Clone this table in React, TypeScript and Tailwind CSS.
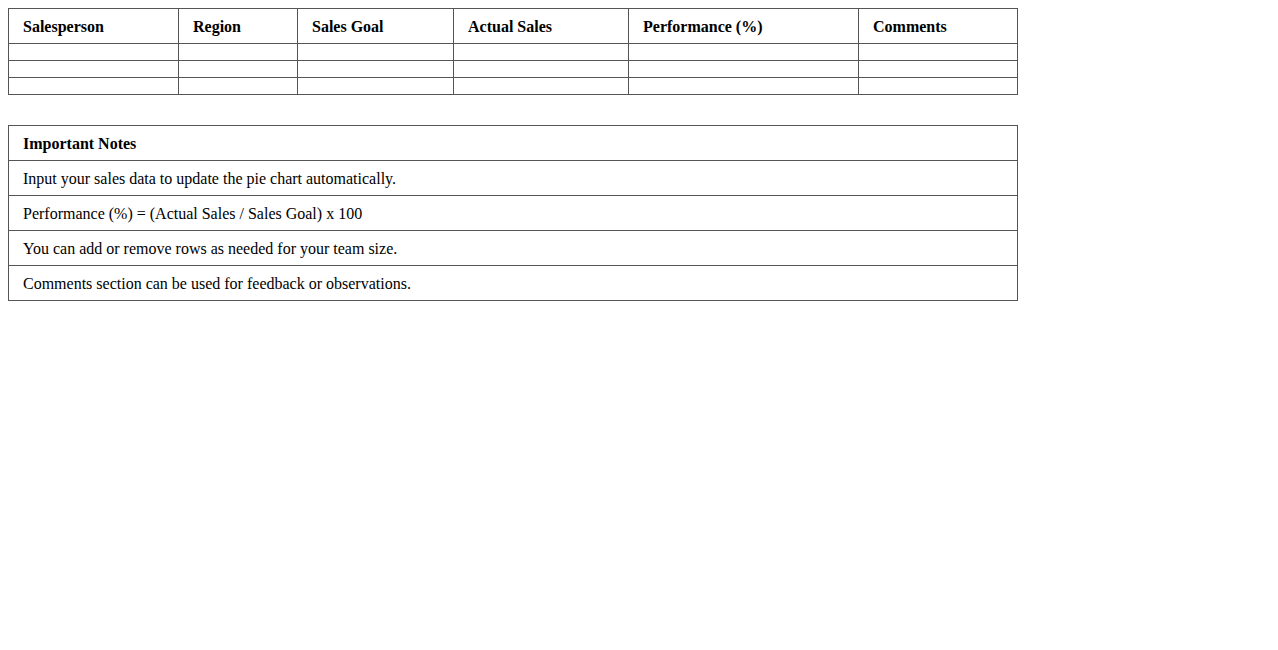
const COLS = [
  { label: "Salesperson", w: "w-[170px]" },
  { label: "Region", w: "w-[119px]" },
  { label: "Sales Goal", w: "w-[156px]" },
  { label: "Actual Sales", w: "w-[175px]" },
  { label: "Performance (%)", w: "w-[230px]" },
  { label: "Comments", w: "w-[159px]" },
];

const NOTES = [
  "Input your sales data to update the pie chart automatically.",
  "Performance (%) = (Actual Sales / Sales Goal) x 100",
  "You can add or remove rows as needed for your team size.",
  "Comments section can be used for feedback or observations.",
];

export default function App() {
  return (
    <div className="min-h-screen bg-white p-2 text-[16px] text-black font-['Liberation_Serif','Times_New_Roman',serif]">
      {/* Sales table */}
      <table className="table-fixed border-collapse w-[1010px] border border-[#555]">
        <thead>
          <tr>
            {COLS.map((c) => (
              <th
                key={c.label}
                className={`${c.w} border border-[#555] px-[14px] pt-[9px] pb-[7px] text-left font-bold leading-[18px]`}
              >
                {c.label}
              </th>
            ))}
          </tr>
        </thead>
        <tbody>
          {[0, 1, 2].map((r) => (
            <tr key={r}>
              {COLS.map((c) => (
                <td key={c.label} className="border border-[#555] px-[14px] py-2 h-[17px]"></td>
              ))}
            </tr>
          ))}
        </tbody>
      </table>

      {/* Notes */}
      <table className="mt-[30px] border-collapse w-[1010px] border border-[#555]">
        <thead>
          <tr>
            <th className="border border-[#555] px-[14px] pt-[9px] pb-[7px] text-left font-bold leading-[18px]">
              Important Notes
            </th>
          </tr>
        </thead>
        <tbody>
          {NOTES.map((n) => (
            <tr key={n}>
              <td className="border border-[#555] px-[14px] pt-[9px] pb-[7px] leading-[18px]">{n}</td>
            </tr>
          ))}
        </tbody>
      </table>
    </div>
  );
}
